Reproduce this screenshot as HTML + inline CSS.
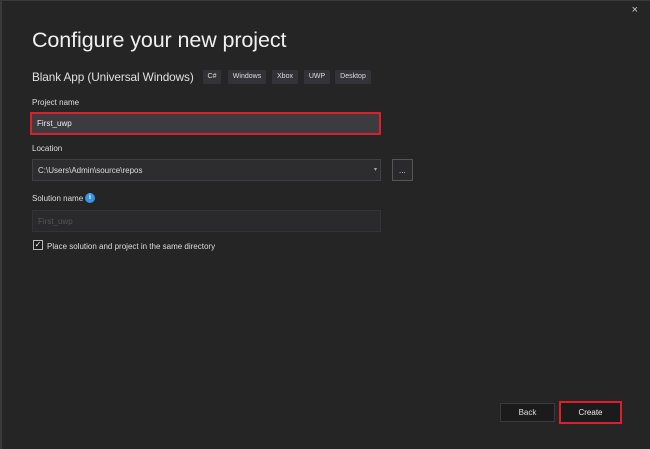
<!DOCTYPE html>
<html><head><style>
*{margin:0;padding:0;box-sizing:border-box}
body{width:650px;height:449px;background:#252526;font-family:"Liberation Sans",sans-serif;color:#e8e8e8;position:relative;overflow:hidden}
.a{position:absolute}
.tag{position:absolute;top:70px;height:14px;background:#333337;color:#ddd;font-size:7px;line-height:14px;text-align:center;border-radius:1px}
.lbl{font-size:8px;color:#ddd}
.box{background:#333337;border:1px solid #3f3f46}
</style></head><body>
<div class="a" style="left:0;top:0;width:2px;height:449px;background:#3a3a3c"></div>
<div class="a" style="left:0;top:0;width:650px;height:1px;background:#3a3a3c"></div>
<div class="a" style="right:12px;top:4px;font-size:11px;color:#ccc">×</div>
<div class="a" style="left:32px;top:28px;font-size:21.5px;color:#f0f0f0;letter-spacing:-0.1px">Configure your new project</div>
<div class="a" style="left:32px;top:70px;font-size:11.8px;color:#e0e0e0;letter-spacing:-0.1px">Blank App (Universal Windows)</div>
<div class="tag" style="left:203px;width:18px">C#</div>
<div class="tag" style="left:228px;width:38px">Windows</div>
<div class="tag" style="left:272px;width:26px">Xbox</div>
<div class="tag" style="left:304px;width:26px">UWP</div>
<div class="tag" style="left:335px;width:36px">Desktop</div>
<div class="a lbl" style="left:32px;top:98px">Project name</div>
<div class="a" style="left:30px;top:112px;width:351px;height:23px;border:2px solid #d9202c;background:#3c3c40"></div>
<div class="a" style="left:37px;top:119px;font-size:8px;color:#eee">First_uwp</div>
<div class="a lbl" style="left:32px;top:144px">Location</div>
<div class="a box" style="left:32px;top:159px;width:349px;height:22px;background:#2d2d30"></div>
<div class="a" style="left:38px;top:166px;font-size:8px;color:#ddd">C:\Users\Admin\source\repos</div>
<div class="a" style="left:374px;top:166px;font-size:6px;color:#aaa">▾</div>
<div class="a box" style="left:392px;top:159px;width:21px;height:22px;background:#2a2a2c;border-color:#555"></div>
<div class="a" style="left:399px;top:166px;font-size:8px;color:#ddd">...</div>
<div class="a lbl" style="left:32px;top:194px">Solution name</div>
<div class="a" style="left:85px;top:193px;width:10px;height:10px;border-radius:50%;background:#3794e6;color:#fff;font-size:7px;line-height:10px;text-align:center;font-weight:bold">i</div>
<div class="a box" style="left:32px;top:210px;width:349px;height:22px;background:#2a2a2c;border-color:#333"></div>
<div class="a" style="left:38px;top:217px;font-size:8px;color:#555">First_uwp</div>
<div class="a" style="left:33px;top:240px;width:10px;height:10px;border:1px solid #bbb;background:#1e1e1e;color:#fff;font-size:8px;line-height:8px;text-align:center">✓</div>
<div class="a" style="left:47px;top:242px;font-size:8px;color:#ddd">Place solution and project in the same directory</div>
<div class="a" style="left:500px;top:403px;width:55px;height:19px;background:#1b1b1c;border:1px solid #3a3a3c;font-size:8px;line-height:17px;text-align:center;color:#ddd">Back</div>
<div class="a" style="left:559px;top:401px;width:63px;height:23px;border:2px solid #d9202c;background:#1b1b1c;font-size:8px;line-height:19px;text-align:center;color:#eee">Create</div>
</body></html>
